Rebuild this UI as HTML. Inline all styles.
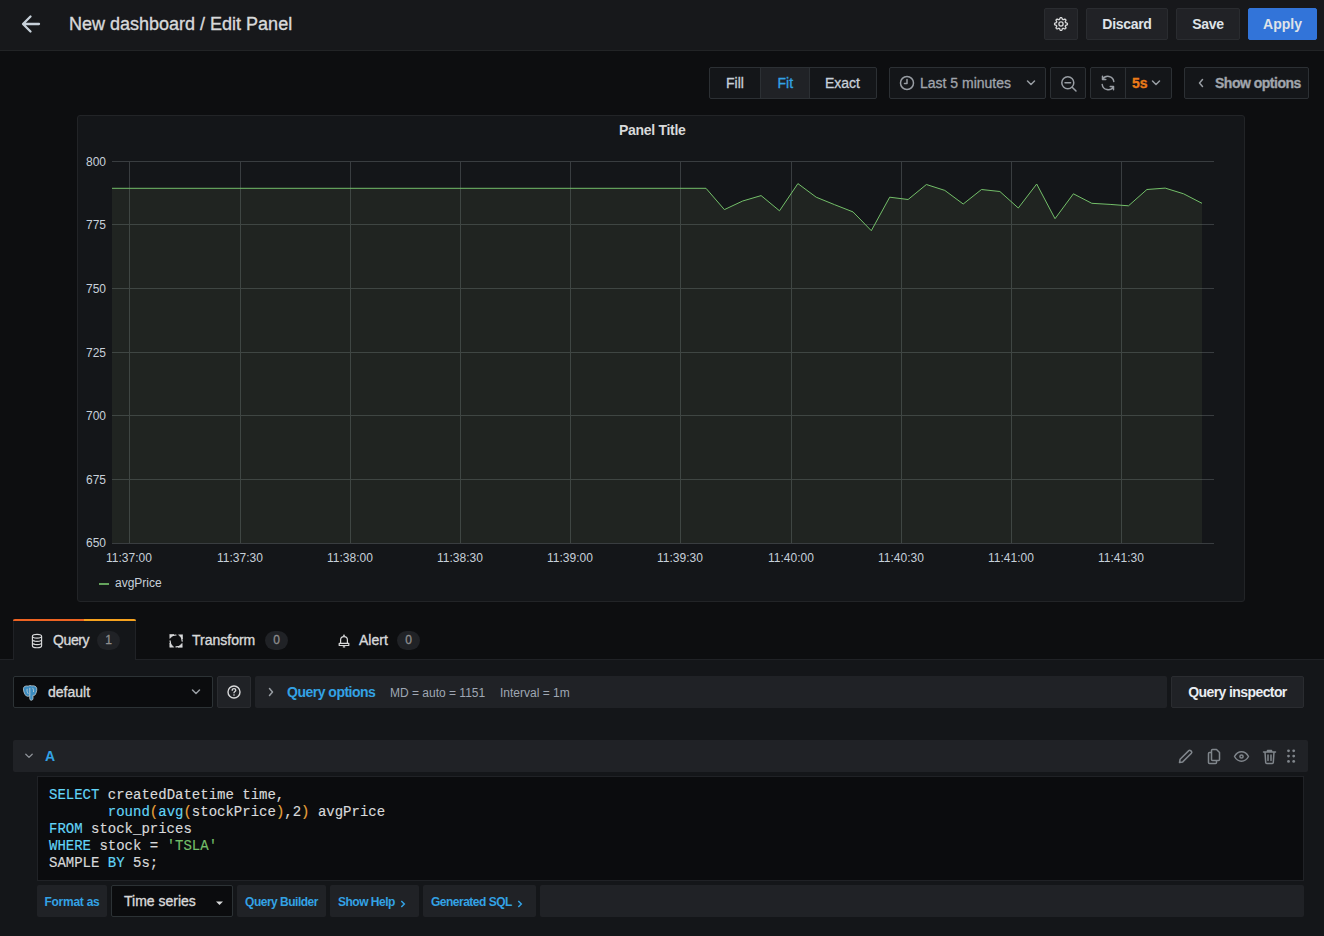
<!DOCTYPE html>
<html><head><meta charset="utf-8">
<style>
*{box-sizing:border-box;margin:0;padding:0}
html,body{width:1324px;height:936px;overflow:hidden}
body{background:#0d0e10;font-family:"Liberation Sans",sans-serif;color:#c7d0d9;position:relative}
.abs{position:absolute}
.hdr{left:0;top:0;width:1324px;height:51px;background:#17181b;border-bottom:1px solid #222426}
.title{left:69px;top:13px;font-size:18px;line-height:22px;color:#d8d9da;white-space:nowrap}
.btn{position:absolute;top:8px;height:32px;background:#212226;border:1px solid #2a2c30;border-radius:2px;color:#dfe3e8;font-weight:bold;font-size:14px;display:flex;align-items:center;justify-content:center}
.tb{position:absolute;top:67px;height:32px;background:#141619;border:1px solid #2c3034;border-radius:2px;color:#a0a5ac;font-size:14px}
.tb span,.tb svg{position:absolute}
.tb span{-webkit-text-stroke:0.3px currentColor}
.panel{left:77px;top:115px;width:1168px;height:487px;background:#141619;border:1px solid #222427;border-radius:3px}
.lbl{position:absolute;font-size:12px;line-height:14px;color:#c7d0d9;white-space:nowrap}
.yl{text-align:right;width:40px;left:66px}
.xl{width:80px;text-align:center}
.content{left:0;top:659px;width:1324px;height:277px;background:#141619;border-top:1px solid #202226}
.tab{position:absolute;top:619px;height:41px;font-size:14px;color:#d8d9da}
.med{-webkit-text-stroke:0.35px currentColor}
.badge{position:absolute;top:631px;height:19px;width:23px;border-radius:10px;background:#202226;color:#8e8e8e;font-size:12px;line-height:19px;text-align:center;-webkit-text-stroke:0.3px currentColor}
.code{font-family:"Liberation Mono",monospace;font-size:14px;line-height:16px;color:#d8d9da;white-space:pre;transform:scaleY(1.1);transform-origin:0 0;-webkit-text-stroke:0.15px currentColor}
.k{color:#62d4f6}.p{color:#e8a33c}.s{color:#73bf69}
.fb{position:absolute;top:885px;height:32px;background:#202226;border-radius:2px;color:#33a2e5;font-weight:bold;font-size:12px;line-height:34px;white-space:nowrap}
.ic{stroke:#989da3;fill:none;stroke-width:1.5;stroke-linecap:round;stroke-linejoin:round}
</style></head><body>
<!-- HEADER -->
<div class="abs hdr"></div>
<svg class="abs" style="left:20px;top:13px" width="22" height="22" viewBox="0 0 22 22"><path d="M19 11H3.5M10.5 3.5L3 11 10.5 18.5" stroke="#c7d0d9" stroke-width="2.3" fill="none" stroke-linecap="round" stroke-linejoin="round"/></svg>
<div class="abs title med">New dashboard / Edit Panel</div>

<div class="btn" style="left:1044px;width:34px"><svg width="16" height="16" viewBox="0 0 16 16"><path d="M14.45 8.00 L14.41 8.32 L14.30 8.62 L14.09 8.90 L13.49 9.09 L12.90 9.23 L12.66 9.41 L12.50 9.61 L12.39 9.82 L12.32 10.04 L12.30 10.30 L12.33 10.60 L12.66 11.11 L12.94 11.66 L12.89 12.01 L12.76 12.31 L12.56 12.56 L12.31 12.76 L12.01 12.89 L11.66 12.94 L11.11 12.66 L10.60 12.33 L10.30 12.30 L10.04 12.32 L9.82 12.39 L9.61 12.50 L9.41 12.66 L9.23 12.90 L9.09 13.49 L8.90 14.09 L8.62 14.30 L8.32 14.41 L8.00 14.45 L7.68 14.41 L7.38 14.30 L7.10 14.09 L6.91 13.49 L6.77 12.90 L6.59 12.66 L6.39 12.50 L6.18 12.39 L5.96 12.32 L5.70 12.30 L5.40 12.33 L4.89 12.66 L4.34 12.94 L3.99 12.89 L3.69 12.76 L3.44 12.56 L3.24 12.31 L3.11 12.01 L3.06 11.66 L3.34 11.11 L3.67 10.60 L3.70 10.30 L3.68 10.04 L3.61 9.82 L3.50 9.61 L3.34 9.41 L3.10 9.23 L2.51 9.09 L1.91 8.90 L1.70 8.62 L1.59 8.32 L1.55 8.00 L1.59 7.68 L1.70 7.38 L1.91 7.10 L2.51 6.91 L3.10 6.77 L3.34 6.59 L3.50 6.39 L3.61 6.18 L3.68 5.96 L3.70 5.70 L3.67 5.40 L3.34 4.89 L3.06 4.34 L3.11 3.99 L3.24 3.69 L3.44 3.44 L3.69 3.24 L3.99 3.11 L4.34 3.06 L4.89 3.34 L5.40 3.67 L5.70 3.70 L5.96 3.68 L6.18 3.61 L6.39 3.50 L6.59 3.34 L6.77 3.10 L6.91 2.51 L7.10 1.91 L7.38 1.70 L7.68 1.59 L8.00 1.55 L8.32 1.59 L8.62 1.70 L8.90 1.91 L9.09 2.51 L9.23 3.10 L9.41 3.34 L9.61 3.50 L9.82 3.61 L10.04 3.68 L10.30 3.70 L10.60 3.67 L11.11 3.34 L11.66 3.06 L12.01 3.11 L12.31 3.24 L12.56 3.44 L12.76 3.69 L12.89 3.99 L12.94 4.34 L12.66 4.89 L12.33 5.40 L12.30 5.70 L12.32 5.96 L12.39 6.18 L12.50 6.39 L12.66 6.59 L12.90 6.77 L13.49 6.91 L14.09 7.10 L14.30 7.38 L14.41 7.68Z" stroke="#d8d9da" stroke-width="1.3" fill="none" stroke-linejoin="round"/><circle cx="8" cy="8" r="2.1" stroke="#d8d9da" stroke-width="1.3" fill="none"/></svg></div>
<div class="btn" style="left:1086px;width:82px;letter-spacing:-0.3px">Discard</div>
<div class="btn" style="left:1176px;width:64px;letter-spacing:-0.3px">Save</div>
<div class="btn" style="left:1248px;width:69px;background:#3274d9;border-color:#3274d9">Apply</div>

<!-- TOOLBAR -->
<div class="tb" style="left:709px;width:168px">
  <div class="abs" style="left:50px;top:0;width:50px;height:30px;background:#202226;border-left:1px solid #2c3034;border-right:1px solid #2c3034"></div>
  <span style="left:16px;top:7px;color:#c7d0d9">Fill</span>
  <span style="left:67.5px;top:7px;color:#33a2e5">Fit</span>
  <span style="left:115px;top:7px;color:#c7d0d9">Exact</span>
</div>
<div class="tb" style="left:889px;width:157px">
  <svg style="left:9px;top:7px" width="16" height="16" viewBox="0 0 16 16"><circle cx="8" cy="8" r="6.5" class="ic"/><path d="M8 4.5V8.5H5.5" class="ic"/></svg>
  <span style="left:30px;top:7px">Last 5 minutes</span>
  <svg style="left:136px;top:11px" width="10" height="8" viewBox="0 0 10 8"><path d="M1.5 2l3.5 3.5L8.5 2" class="ic"/></svg>
</div>
<div class="tb" style="left:1050px;width:36px">
  <svg style="left:9px;top:7px" width="18" height="18" viewBox="0 0 18 18"><circle cx="7.8" cy="7.8" r="6" class="ic"/><path d="M5 7.8h5.6M12.2 12.2L16 16" class="ic"/></svg>
</div>
<div class="tb" style="left:1090px;width:82px">
  <div class="abs" style="left:34px;top:0;width:1px;height:30px;background:#2c3034"></div>
  <svg style="left:8px;top:6px;transform:scaleX(-1)" width="18" height="18" viewBox="0 0 18 18"><path d="M3.2 7.5A6 6 0 0 1 14.3 5.2M14.8 10.5A6 6 0 0 1 3.7 12.8M14.5 2.2v3.3h-3.3M3.5 15.8v-3.3h3.3" class="ic"/></svg>
  <span style="left:41px;top:7px;color:#eb7b18;font-weight:bold">5s</span>
  <svg style="left:60px;top:11px" width="10" height="8" viewBox="0 0 10 8"><path d="M1.5 2l3.5 3.5L8.5 2" class="ic"/></svg>
</div>
<div class="tb" style="left:1184px;width:125px">
  <svg style="left:12px;top:10px" width="8" height="10" viewBox="0 0 8 10"><path d="M5.5 1.5L2.5 5l3 3.5" class="ic"/></svg>
  <span style="left:30px;top:7px;font-weight:bold;letter-spacing:-0.5px">Show options</span>
</div>

<!-- PANEL -->
<div class="abs panel"></div>
<div class="abs" style="left:619px;top:122px;font-size:14px;font-weight:bold;color:#d8d9da;letter-spacing:-0.3px">Panel Title</div>
<svg class="abs" style="left:0;top:0" width="1324" height="620" viewBox="0 0 1324 620">
  <g stroke="#393d40" stroke-width="1" shape-rendering="crispEdges">
    <path d="M112 161.5H1214M112 224.5H1214M112 288.5H1214M112 352.5H1214M112 415.5H1214M112 479.5H1214M112 543.5H1214"/>
    <path d="M129.5 161V543M240.5 161V543M350.5 161V543M460.5 161V543M570.5 161V543M680.5 161V543M791.5 161V543M901.5 161V543M1011.5 161V543M1121.5 161V543"/>
  </g>
  <path d="M112,188.3 L706.0,188.3 L724.4,209.6 L742.7,201.0 L761.1,195.6 L779.5,210.8 L797.9,183.6 L816.2,197.2 L834.6,204.7 L853.0,211.9 L871.3,230.7 L889.7,197.2 L908.1,199.5 L926.4,184.5 L944.8,190.4 L963.2,204.0 L981.5,189.5 L999.9,191.5 L1018.3,208.0 L1036.7,184.0 L1055.0,218.7 L1073.4,193.8 L1091.8,203.3 L1110.1,204.4 L1128.5,205.8 L1146.9,189.5 L1165.2,188.1 L1183.6,193.8 L1202.0,203.3 L1202,543 L112,543 Z" fill="rgba(106,130,83,0.14)"/>
  <path d="M112,188.3 L706.0,188.3 L724.4,209.6 L742.7,201.0 L761.1,195.6 L779.5,210.8 L797.9,183.6 L816.2,197.2 L834.6,204.7 L853.0,211.9 L871.3,230.7 L889.7,197.2 L908.1,199.5 L926.4,184.5 L944.8,190.4 L963.2,204.0 L981.5,189.5 L999.9,191.5 L1018.3,208.0 L1036.7,184.0 L1055.0,218.7 L1073.4,193.8 L1091.8,203.3 L1110.1,204.4 L1128.5,205.8 L1146.9,189.5 L1165.2,188.1 L1183.6,193.8 L1202.0,203.3" fill="none" stroke="#73bf69" stroke-width="1"/>
  <rect x="99" y="583" width="10" height="2" fill="#64a35c"/>
</svg>
<div class="lbl yl" style="top:155px">800</div>
<div class="lbl yl" style="top:218px">775</div>
<div class="lbl yl" style="top:282px">750</div>
<div class="lbl yl" style="top:346px">725</div>
<div class="lbl yl" style="top:409px">700</div>
<div class="lbl yl" style="top:473px">675</div>
<div class="lbl yl" style="top:536px">650</div>
<div class="lbl xl" style="left:89px;top:551px">11:37:00</div>
<div class="lbl xl" style="left:200px;top:551px">11:37:30</div>
<div class="lbl xl" style="left:310px;top:551px">11:38:00</div>
<div class="lbl xl" style="left:420px;top:551px">11:38:30</div>
<div class="lbl xl" style="left:530px;top:551px">11:39:00</div>
<div class="lbl xl" style="left:640px;top:551px">11:39:30</div>
<div class="lbl xl" style="left:751px;top:551px">11:40:00</div>
<div class="lbl xl" style="left:861px;top:551px">11:40:30</div>
<div class="lbl xl" style="left:971px;top:551px">11:41:00</div>
<div class="lbl xl" style="left:1081px;top:551px">11:41:30</div>
<div class="lbl" style="left:115px;top:576px">avgPrice</div>

<!-- TABS -->
<div class="abs content"></div>
<div class="tab" style="left:13px;width:123px;background:#141619;border-left:1px solid #202226;border-right:1px solid #202226">
  <div class="abs" style="left:-1px;top:0;width:123px;height:2px;background:linear-gradient(90deg,#ee6322 0,#ee6322 58%,#f6a21e 58%,#f6a21e 100%);border-radius:2px 2px 0 0"></div>
</div>
<svg class="abs" style="left:31px;top:633px" width="12" height="16" viewBox="0 0 12 16"><path d="M1.4 3.3C1.4 2.1 3.5 1.3 6 1.3s4.6.8 4.6 2v9.4c0 1.2-2.1 2-4.6 2s-4.6-.8-4.6-2zM1.4 3.3c0 1.1 2.1 1.8 4.6 1.8s4.6-.7 4.6-1.8M1.4 6.6c0 1.1 2.1 1.8 4.6 1.8s4.6-.7 4.6-1.8M1.4 9.8c0 1.1 2.1 1.8 4.6 1.8s4.6-.7 4.6-1.8" stroke="#d8d9da" stroke-width="1.15" fill="none"/><circle cx="3" cy="7.6" r=".55" fill="#d8d9da"/><circle cx="3" cy="10.8" r=".55" fill="#d8d9da"/></svg>
<div class="abs med" style="left:53px;top:632px;font-size:14px;color:#d8d9da;letter-spacing:-0.4px">Query</div>
<div class="badge" style="left:97px">1</div>
<svg class="abs" style="left:169px;top:633px" width="15" height="16" viewBox="0 0 15 16"><g fill="#d8d9da" stroke="#d8d9da" stroke-width="0.6" stroke-linejoin="round" stroke-linecap="round"><path d="M1 1.5L5 1.5 1 5.2z"/><path d="M13.5 2L13.5 6 9.8 2z"/><path d="M13 14.3L9 14.3 13 10.6z"/><path d="M.8 14L.8 10 4.5 14z"/></g><g stroke="#d8d9da" stroke-width="1.2" stroke-linecap="round" fill="none"><path d="M3 2.6L7 2M12.5 4.2L13.2 8.2M11 13.3L7 13.9M1.8 11.8L1.1 7.8"/></g></svg>
<div class="abs med" style="left:192px;top:632px;font-size:14px;color:#d8d9da">Transform</div>
<div class="badge" style="left:265px">0</div>
<svg class="abs" style="left:338px;top:634px" width="12" height="14" viewBox="0 0 12 14"><path d="M2.6 8.9V6A3.4 3.4 0 0 1 9.4 6v2.9M1.2 9.4h9.6v2.1H1.2zM4.8 12.8h2.4" stroke="#d8d9da" stroke-width="1.2" fill="none" stroke-linejoin="round"/><circle cx="6" cy="1.3" r="0.9" fill="#d8d9da"/></svg>
<div class="abs med" style="left:359px;top:632px;font-size:14px;color:#d8d9da">Alert</div>
<div class="badge" style="left:397px">0</div>

<!-- QUERY ROW -->
<div class="abs" style="left:13px;top:676px;width:200px;height:32px;background:#0b0c0e;border:1px solid #2c3235;border-radius:2px"></div>
<svg class="abs" style="left:22px;top:685px" width="16" height="16" viewBox="0 0 17 17" preserveAspectRatio="none"><path d="M1.5 4C1.5 1.5 4 .6 6.5 1.2 7.5 .6 9.5 .4 10.5 1c2-.6 5 .2 5.2 3 .2 2.5-.8 4.5-1.5 6-.5 1-1.5 1.2-2.5 1V14c0 1.5-.8 2.2-1.8 2.2S8.2 15.5 8.2 14v-2.5c-1 .6-2.2.8-3.5.2C3 10.5 1.5 7 1.5 4z" fill="#3a8bbf" stroke="#c9d1d6" stroke-width="0.8"/><path d="M8.3 3v8.5M5.5 4c-.5 2 0 4 1.2 5.5M11 3c1 1 1.5 2.5 1.2 4.5" stroke="#c9d1d6" stroke-width="0.9" fill="none"/></svg>
<div class="abs med" style="left:48px;top:684px;font-size:14px;color:#d8d9da">default</div>
<svg class="abs" style="left:191px;top:688px" width="10" height="8" viewBox="0 0 10 8"><path d="M1.5 2l3.5 3.5L8.5 2" class="ic"/></svg>
<div class="abs" style="left:217px;top:676px;width:34px;height:32px;background:#202226;border:1px solid #2a2c30;border-radius:2px"></div>
<svg class="abs" style="left:226px;top:684px" width="16" height="16" viewBox="0 0 16 16"><circle cx="8" cy="8" r="6" stroke="#d8d9da" stroke-width="1.4" fill="none"/><path d="M6.2 6.3c0-1 .8-1.7 1.8-1.7s1.8.7 1.8 1.6c0 1.3-1.8 1.3-1.8 2.6" stroke="#d8d9da" stroke-width="1.3" fill="none" stroke-linecap="round"/><circle cx="8" cy="11" r=".8" fill="#d8d9da"/></svg>
<div class="abs" style="left:255px;top:676px;width:912px;height:32px;background:#202226;border-radius:2px"></div>
<svg class="abs" style="left:267px;top:687px" width="8" height="10" viewBox="0 0 8 10"><path d="M2.5 1.5L5.5 5l-3 3.5" class="ic"/></svg>
<div class="abs" style="left:287px;top:684px;font-size:14px;font-weight:bold;color:#33a2e5;letter-spacing:-0.5px">Query options</div>
<div class="abs" style="left:390px;top:686px;font-size:12px;color:#9fa7b3">MD = auto = 1151</div>
<div class="abs" style="left:500px;top:686px;font-size:12px;color:#9fa7b3">Interval = 1m</div>
<div class="abs" style="left:1171px;top:676px;width:133px;height:32px;background:#202226;border:1px solid #2a2c30;border-radius:2px;color:#e9edf2;font-size:14px;font-weight:bold;line-height:30px;text-align:center;letter-spacing:-0.6px">Query inspector</div>

<!-- QUERY A -->
<div class="abs" style="left:13px;top:740px;width:1295px;height:32px;background:#202226;border-radius:2px"></div>
<svg class="abs" style="left:24px;top:752px" width="10" height="8" viewBox="0 0 10 8"><path d="M1.8 2.3l3.2 3.1 3.2-3.1" class="ic" style="stroke:#8e9399;stroke-width:1.3"/></svg>
<div class="abs" style="left:45px;top:748px;font-size:14px;font-weight:bold;color:#33a2e5">A</div>
<svg class="abs" style="left:1177px;top:748px" width="17" height="17" viewBox="0 0 17 17"><path d="M2.5 14.5l.6-3.2L11.8 2.6a1.3 1.3 0 0 1 1.8 0l.8.8a1.3 1.3 0 0 1 0 1.8L5.7 13.9z" class="ic" style="stroke:#80868c"/></svg>
<svg class="abs" style="left:1206px;top:748px" width="16" height="17" viewBox="0 0 16 17"><path d="M5 4.5H3.5a1 1 0 0 0-1 1v9a1 1 0 0 0 1 1h6a1 1 0 0 0 1-1V13M5.5 2.5a1 1 0 0 1 1-1h4l3 3v7a1 1 0 0 1-1 1h-6a1 1 0 0 1-1-1z" class="ic" style="stroke:#80868c"/></svg>
<svg class="abs" style="left:1233px;top:749px" width="17" height="15" viewBox="0 0 17 15"><path d="M1.5 7.5C3.3 4.3 5.8 2.8 8.5 2.8s5.2 1.5 7 4.7c-1.8 3.2-4.3 4.7-7 4.7s-5.2-1.5-7-4.7z" class="ic" style="stroke:#80868c"/><circle cx="8.5" cy="7.5" r="1.6" class="ic" style="stroke:#80868c"/></svg>
<svg class="abs" style="left:1262px;top:748px" width="15" height="17" viewBox="0 0 15 17"><path d="M1.5 4h12M5.5 4V2.5h4V4M3 4l.7 10.5a1 1 0 0 0 1 .9h5.6a1 1 0 0 0 1-.9L12 4M6 7v5.5M9 7v5.5" class="ic" style="stroke:#80868c"/></svg>
<svg class="abs" style="left:1285px;top:748px" width="12" height="17" viewBox="0 0 12 17"><g fill="#80868c"><circle cx="3.5" cy="2.8" r="1.4"/><circle cx="8.7" cy="2.8" r="1.4"/><circle cx="3.5" cy="8.1" r="1.4"/><circle cx="8.7" cy="8.1" r="1.4"/><circle cx="3.5" cy="13.4" r="1.4"/><circle cx="8.7" cy="13.4" r="1.4"/></g></svg>

<div class="abs" style="left:37px;top:776px;width:1267px;height:105px;background:#0b0c0e;border:1px solid #202226"></div>
<div class="abs code" style="left:49px;top:786px"><span class="k">SELECT</span> createdDatetime time,</div>
<div class="abs code" style="left:49px;top:803px">       <span class="k">round</span><span class="p">(</span><span class="k">avg</span><span class="p">(</span>stockPrice<span class="p">)</span>,2<span class="p">)</span> avgPrice</div>
<div class="abs code" style="left:49px;top:820px"><span class="k">FROM</span> stock_prices</div>
<div class="abs code" style="left:49px;top:837px"><span class="k">WHERE</span> stock = <span class="s">'TSLA'</span></div>
<div class="abs code" style="left:49px;top:854px">SAMPLE <span class="k">BY</span> 5s;</div>


<!-- FOOTER -->
<div class="fb" style="left:37px;width:70px;text-align:center;letter-spacing:-0.25px">Format as</div>
<div class="abs" style="left:111px;top:885px;width:122px;height:32px;background:#0b0c0e;border:1px solid #2c3235;border-radius:2px"></div>
<div class="abs med" style="left:124px;top:893px;font-size:14px;color:#d8d9da">Time series</div>
<svg class="abs" style="left:215px;top:900px" width="9" height="6" viewBox="0 0 9 6"><path d="M1 1.5h7L4.5 5z" fill="#d8d9da"/></svg>
<div class="fb" style="left:237px;width:89px;text-align:center;letter-spacing:-0.5px">Query Builder</div>
<div class="fb" style="left:330px;width:89px;padding-left:8px;letter-spacing:-0.5px">Show Help<svg style="position:absolute;left:70px;top:15px" width="6" height="8" viewBox="0 0 6 8"><path d="M1.3 1l3 3-3 3" stroke="#33a2e5" stroke-width="1.5" fill="none"/></svg></div>
<div class="fb" style="left:423px;width:113px;padding-left:8px;letter-spacing:-0.5px">Generated SQL<svg style="position:absolute;left:94px;top:15px" width="6" height="8" viewBox="0 0 6 8"><path d="M1.3 1l3 3-3 3" stroke="#33a2e5" stroke-width="1.5" fill="none"/></svg></div>
<div class="abs" style="left:540px;top:885px;width:764px;height:32px;background:#202226;border-radius:2px"></div>
</body></html>
